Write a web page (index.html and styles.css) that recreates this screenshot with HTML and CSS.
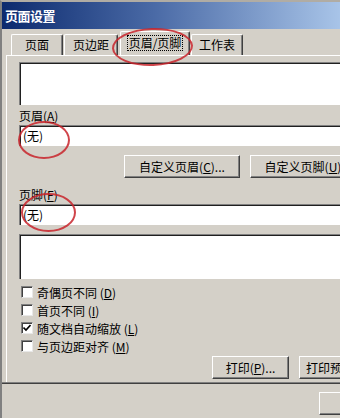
FILE: index.html
```html
<!DOCTYPE html>
<html lang="zh-CN">
  <head>
    <meta charset="UTF-8" />
    <meta name="viewport" content="width=device-width, initial-scale=1.0" />
    <title>页面设置</title>
    <link rel="stylesheet" href="styles.css">
  </head>
  <body>
    <div class="dialog">
      <div class="titlebar">页面设置</div>

      <div class="tabs">
        <div class="tab tab-1">页面</div>
        <div class="tab tab-2">页边距</div>
        <div class="tab tab-3 active"><span class="focus">页眉/页脚</span></div>
        <div class="tab tab-4">工作表</div>
      </div>

      <div class="panel">
        <div class="sunken preview"></div>

        <div class="label label-header">页眉(<u>A</u>)</div>
        <div class="sunken field">(无)</div>

        <div class="button-row custom-row">
          <div class="btn btn-custom">自定义页眉(<u>C</u>)...</div>
          <div class="btn btn-custom">自定义页脚(<u>U</u>)...</div>
        </div>

        <div class="label label-footer">页脚(<u>F</u>)</div>
        <div class="sunken field">(无)</div>

        <div class="sunken preview preview-footer"></div>

        <ul class="options">
          <li><span class="check"></span>奇偶页不同 (<u>D</u>)</li>
          <li><span class="check"></span>首页不同 (<u>I</u>)</li>
          <li>
            <span class="check">
              <svg width="8" height="8" viewBox="0 0 8 8">
                <path d="M0.5 3.5 L3 6 L7.5 1" fill="none" stroke="#000" stroke-width="1.6" />
              </svg>
            </span>随文档自动缩放 (<u>L</u>)
          </li>
          <li><span class="check"></span>与页边距对齐 (<u>M</u>)</li>
        </ul>

        <div class="button-row print-row">
          <div class="btn btn-print">打印(<u>P</u>)...</div>
          <div class="btn btn-print">打印预览(<u>W</u>)...</div>
        </div>
      </div>

      <div class="footer">
        <div class="btn btn-ok">确定</div>
      </div>

      <!-- 红色圈注 -->
      <div class="ring ring-tab"></div>
      <div class="ring ring-header"></div>
      <div class="ring ring-footer"></div>
    </div>
  </body>
</html>
```

FILE: styles.css
```css
body {
  margin: 0;
  width: 340px;
  height: 418px;
  overflow: hidden;
  background-color: #d4d0c8;
  font-family: 'Noto Sans CJK SC', 'DejaVu Sans', sans-serif;
  font-size: 12px;
  color: #000;
}
.dialog {
  position: relative;
  height: 418px;
  border-left: 2px solid #808080;
  border-top: 2px solid #b0aca4;
  box-sizing: border-box;
}
.titlebar {
  height: 27px;
  line-height: 27px;
  padding-left: 3px;
  color: #fff;
  font-weight: bold;
  font-size: 13px;
  letter-spacing: -0.5px;
  background: linear-gradient(to right, #0c2a6e, #4a6aa6 45%, #a8c4e8);
}
.tabs {
  display: flex;
  align-items: flex-end;
  height: 26px;
  padding-left: 9px;
}
.tab {
  height: 20px;
  line-height: 20px;
  text-align: center;
  border-top: 1px solid #fff;
  border-left: 1px solid #fff;
  border-right: 1px solid #404040;
  border-radius: 2px 2px 0 0;
  box-shadow: inset -1px 0 #808080;
}
.tab-1 {
  width: 50px;
}
.tab-2 {
  width: 52px;
  margin-left: 1px;
}
.tab-3 {
  width: 68px;
  margin-left: 2px;
}
.tab-4 {
  width: 50px;
  margin-left: 1px;
}
.tab.active {
  height: 23px;
  line-height: 22px;
}
.focus {
  border: 1px dotted #000;
  padding: 0 1px;
  line-height: 14px;
  display: inline-block;
}
.panel {
  margin-left: 4px;
  border-top: 1px solid #fff;
  border-left: 1px solid #fff;
  padding: 6px 0 0 12px;
  height: 328px;
  box-sizing: border-box;
}
.sunken {
  width: 340px;
  background-color: #fff;
  border-top: 1px solid #808080;
  border-left: 1px solid #808080;
  box-shadow: inset 1px 1px #202020;
}
.preview {
  height: 42px;
}
.label {
  height: 18px;
  line-height: 18px;
  margin-top: 2px;
}
.label-footer {
  margin-top: 8px;
}
.field {
  height: 20px;
  line-height: 20px;
  padding-left: 3px;
}
.button-row {
  display: flex;
  gap: 10px;
}
.custom-row {
  margin-top: 9px;
  padding-left: 105px;
}
.btn {
  height: 21px;
  line-height: 21px;
  text-align: center;
  white-space: nowrap;
  flex-shrink: 0;
  border-top: 1px solid #fff;
  border-left: 1px solid #fff;
  border-right: 1px solid #404040;
  border-bottom: 1px solid #404040;
  box-shadow: inset -1px -1px #808080;
}
.btn-custom {
  width: 114px;
}
.preview-footer {
  margin-top: 9px;
  height: 44px;
}
.options {
  list-style: none;
  margin: 4px 0 0;
  padding: 0 0 0 2px;
}
.options li {
  display: flex;
  align-items: center;
  height: 18px;
}
.check {
  display: flex;
  align-items: center;
  justify-content: center;
  width: 10px;
  height: 10px;
  margin-right: 4px;
  background-color: #fff;
  border-top: 1px solid #808080;
  border-left: 1px solid #808080;
  border-right: 1px solid #e8e8e8;
  border-bottom: 1px solid #e8e8e8;
  box-shadow: inset 1px 1px #404040;
}
.print-row {
  margin-top: 1px;
  padding-left: 193px;
}
.btn-print {
  width: 75px;
}
.btn-print + .btn-print {
  width: 100px;
  text-align: left;
  padding-left: 6px;
}
.footer {
  border-top: 1px solid #404040;
  box-shadow: 0 -1px #808080;
  padding: 8px 0 0 317px;
}
.btn-ok {
  width: 70px;
}
.ring {
  position: absolute;
  border: 2px solid #c8242c;
  border-radius: 50%;
  opacity: 0.85;
}
.ring-tab {
  left: 110px;
  top: 26px;
  width: 77px;
  height: 34px;
  transform: rotate(-2deg);
}
.ring-header {
  left: 16px;
  top: 119px;
  width: 48px;
  height: 34px;
}
.ring-footer {
  left: 19px;
  top: 191px;
  width: 51px;
  height: 35px;
}
```
